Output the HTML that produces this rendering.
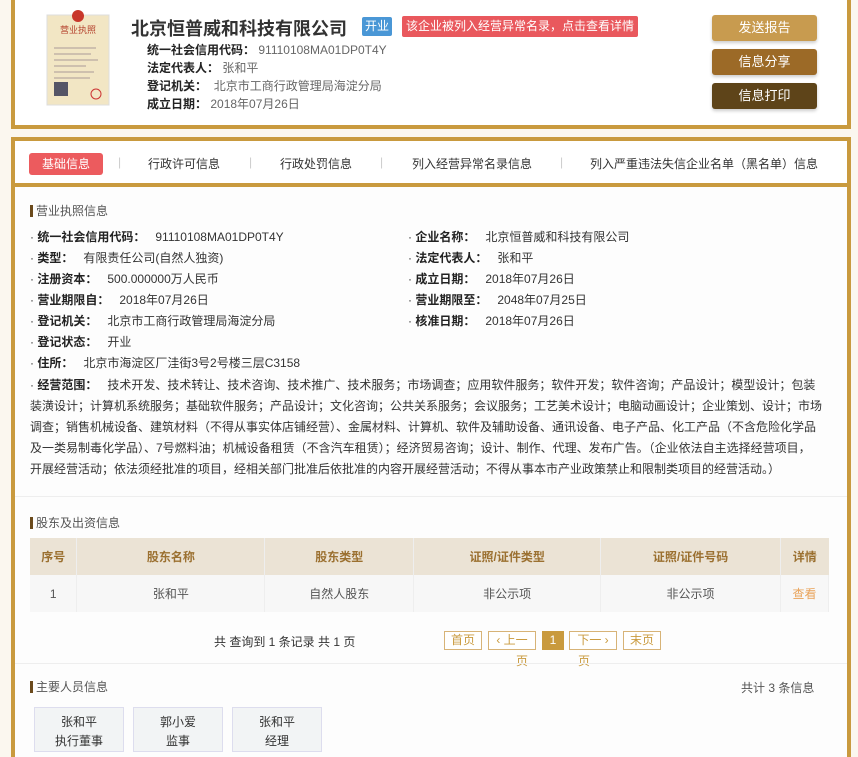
<!DOCTYPE html>
<html><head><meta charset="utf-8"><style>
*{margin:0;padding:0;box-sizing:border-box}
body{width:858px;height:748px;overflow:hidden;background:#fbf7ef;font-family:"Liberation Sans","Noto Sans CJK SC",sans-serif;font-size:12px;color:#333;position:relative}
.a{position:absolute;white-space:nowrap}
.card1{position:absolute;left:11px;top:-4px;width:840px;height:133px;border:4px solid #c99a3e;background:#fff}
.card2{position:absolute;left:11px;top:137px;width:840px;height:620px;border:4px solid #c99a3e;border-bottom:none;background:#fdfdfd}
.tabbar{position:absolute;left:0;top:0;width:832px;height:46px;background:#fff;border-bottom:4px solid #c99a3e}
.btn{position:absolute;left:712px;width:105px;height:26px;border-radius:3px;color:#fff;font-size:13px;text-align:center;line-height:26px;box-shadow:0 2px 3px rgba(0,0,0,.2)}
.lbl{font-weight:bold;color:#222}
.sec{position:absolute;font-size:12px;color:#555;border-left:3px solid #6b4a1c;padding-left:3px;line-height:12px}
table{position:absolute;left:30px;top:538px;width:799px;border-collapse:collapse}
td,th{text-align:center;border-right:1px solid #eee;font-size:12px}
th{background:#ebe3d5;color:#9b7030;height:37px;font-weight:bold}
td{background:#f7f7f7;color:#555;height:37px}
.pg{position:absolute;top:631px;height:19px;border:1px solid #d7b377;color:#c99a3e;font-size:12px;line-height:17px;text-align:center;background:#fff}
.ppl{position:absolute;top:707px;width:90px;height:45px;background:#f2f4f5;border:1px solid #dde;text-align:center;font-size:12px;line-height:19px;padding-top:5px;color:#333}
</style></head><body>
<div class="card1"></div>
<svg class="a" style="left:46px;top:6px" width="64" height="100" viewBox="0 0 64 100">
<rect x="1" y="9" width="62" height="90" fill="#f2e6c4" stroke="#ddd"/>
<circle cx="32" cy="10" r="6" fill="#c8372b"/>
<text x="32" y="27" font-size="9" fill="#b5442f" text-anchor="middle" font-family="Noto Sans CJK SC">营业执照</text>
<g stroke="#a99" stroke-width="1"><line x1="8" y1="42" x2="50" y2="42"/><line x1="8" y1="48" x2="45" y2="48"/><line x1="8" y1="54" x2="52" y2="54"/><line x1="8" y1="60" x2="40" y2="60"/><line x1="8" y1="66" x2="48" y2="66"/><line x1="8" y1="72" x2="44" y2="72"/></g>
<rect x="8" y="76" width="14" height="14" fill="#556"/>
<circle cx="50" cy="88" r="5" fill="none" stroke="#c33"/>
</svg>
<div class="a" style="left:131px;top:15px;font-size:18px;font-weight:bold;color:#333">北京恒普威和科技有限公司</div>
<div class="a" style="left:362px;top:17px;width:30px;height:19px;background:#4a97d6;color:#fff;font-size:12px;text-align:center;line-height:19px;border-radius:2px">开业</div>
<div class="a" style="left:402px;top:16px;width:236px;height:21px;background:#e9585d;color:#fff;font-size:12px;text-align:center;line-height:21px;border-radius:2px">该企业被列入经营异常名录，点击查看详情</div>
<div class="a" style="left:147px;top:41px"><span class="lbl">统一社会信用代码：</span> <span style="color:#666">91110108MA01DP0T4Y</span></div>
<div class="a" style="left:147px;top:59px"><span class="lbl">法定代表人：</span> <span style="color:#666">张和平</span></div>
<div class="a" style="left:147px;top:77px"><span class="lbl">登记机关：</span> &nbsp;<span style="color:#666">北京市工商行政管理局海淀分局</span></div>
<div class="a" style="left:147px;top:95px"><span class="lbl">成立日期：</span> <span style="color:#666">2018年07月26日</span></div>
<div class="btn" style="top:15px;background:#c89b4f">发送报告</div>
<div class="btn" style="top:49px;background:#9c6a27">信息分享</div>
<div class="btn" style="top:83px;background:#5e4419">信息打印</div>

<div class="card2"><div class="tabbar"></div></div>
<div class="a" style="left:29px;top:153px;width:74px;height:22px;background:#ec5b5e;color:#fff;border-radius:3px;text-align:center;line-height:22px">基础信息</div>
<div class="a" style="left:118px;top:155px;color:#ccc">|</div>
<div class="a" style="left:148px;top:155px;font-size:12px">行政许可信息</div>
<div class="a" style="left:249px;top:155px;color:#ccc">|</div>
<div class="a" style="left:280px;top:155px">行政处罚信息</div>
<div class="a" style="left:380px;top:155px;color:#ccc">|</div>
<div class="a" style="left:412px;top:155px">列入经营异常名录信息</div>
<div class="a" style="left:560px;top:155px;color:#ccc">|</div>
<div class="a" style="left:590px;top:155px">列入严重违法失信企业名单（黑名单）信息</div>

<div class="sec" style="left:30px;top:205px">营业执照信息</div>
<div class="a" style="left:30px;top:228px">· <span class="lbl">统一社会信用代码：</span>&nbsp;&nbsp; 91110108MA01DP0T4Y</div>
<div class="a" style="left:30px;top:249px">· <span class="lbl">类型：</span>&nbsp;&nbsp; 有限责任公司(自然人独资)</div>
<div class="a" style="left:30px;top:270px">· <span class="lbl">注册资本：</span>&nbsp;&nbsp; 500.000000万人民币</div>
<div class="a" style="left:30px;top:291px">· <span class="lbl">营业期限自：</span>&nbsp;&nbsp; 2018年07月26日</div>
<div class="a" style="left:30px;top:312px">· <span class="lbl">登记机关：</span>&nbsp;&nbsp; 北京市工商行政管理局海淀分局</div>
<div class="a" style="left:30px;top:333px">· <span class="lbl">登记状态：</span>&nbsp;&nbsp; 开业</div>
<div class="a" style="left:30px;top:354px">· <span class="lbl">住所：</span>&nbsp;&nbsp; 北京市海淀区厂洼街3号2号楼三层C3158</div>
<div class="a" style="left:408px;top:228px">· <span class="lbl">企业名称：</span>&nbsp;&nbsp; 北京恒普威和科技有限公司</div>
<div class="a" style="left:408px;top:249px">· <span class="lbl">法定代表人：</span>&nbsp;&nbsp; 张和平</div>
<div class="a" style="left:408px;top:270px">· <span class="lbl">成立日期：</span>&nbsp;&nbsp; 2018年07月26日</div>
<div class="a" style="left:408px;top:291px">· <span class="lbl">营业期限至：</span>&nbsp;&nbsp; 2048年07月25日</div>
<div class="a" style="left:408px;top:312px">· <span class="lbl">核准日期：</span>&nbsp;&nbsp; 2018年07月26日</div>
<div style="position:absolute;left:30px;top:375px;width:792px;line-height:21px;font-size:12px;color:#333">· <span class="lbl">经营范围：</span>&nbsp;&nbsp; 技术开发、技术转让、技术咨询、技术推广、技术服务；市场调查；应用软件服务；软件开发；软件咨询；产品设计；模型设计；包装装潢设计；计算机系统服务；基础软件服务；产品设计；文化咨询；公共关系服务；会议服务；工艺美术设计；电脑动画设计；企业策划、设计；市场调查；销售机械设备、建筑材料（不得从事实体店铺经营）、金属材料、计算机、软件及辅助设备、通讯设备、电子产品、化工产品（不含危险化学品及一类易制毒化学品）、7号燃料油；机械设备租赁（不含汽车租赁）；经济贸易咨询；设计、制作、代理、发布广告。（企业依法自主选择经营项目，开展经营活动；依法须经批准的项目，经相关部门批准后依批准的内容开展经营活动；不得从事本市产业政策禁止和限制类项目的经营活动。）</div>
<div class="a" style="left:15px;top:496px;width:832px;height:1px;background:#eee"></div>

<div class="sec" style="left:30px;top:517px">股东及出资信息</div>
<table><tr><th style="width:47px">序号</th><th style="width:188px">股东名称</th><th style="width:149px">股东类型</th><th style="width:187px">证照/证件类型</th><th style="width:180px">证照/证件号码</th><th style="width:48px;border-right:none">详情</th></tr>
<tr><td>1</td><td>张和平</td><td>自然人股东</td><td>非公示项</td><td>非公示项</td><td style="color:#e9a35a">查看</td></tr></table>
<div class="a" style="left:214px;top:633px;font-size:12px">共 查询到 1 条记录 共 1 页</div>
<div class="pg" style="left:444px;width:38px">首页</div>
<div class="pg" style="left:488px;width:48px">‹ 上一</div>
<div class="a" style="left:516px;top:652px;color:#c99a3e">页</div>
<div class="pg" style="left:542px;width:22px;background:#c99a3e;color:#fff;border-color:#c99a3e">1</div>
<div class="pg" style="left:569px;width:48px">下一 ›</div>
<div class="a" style="left:578px;top:652px;color:#c99a3e">页</div>
<div class="pg" style="left:623px;width:38px">末页</div>
<div class="a" style="left:15px;top:663px;width:832px;height:1px;background:#eee"></div>

<div class="sec" style="left:30px;top:681px">主要人员信息</div>
<div class="a" style="left:741px;top:679px;color:#555">共计 3 条信息</div>
<div class="ppl" style="left:34px">张和平<br>执行董事</div>
<div class="ppl" style="left:133px">郭小爱<br>监事</div>
<div class="ppl" style="left:232px">张和平<br>经理</div>
</body></html>
